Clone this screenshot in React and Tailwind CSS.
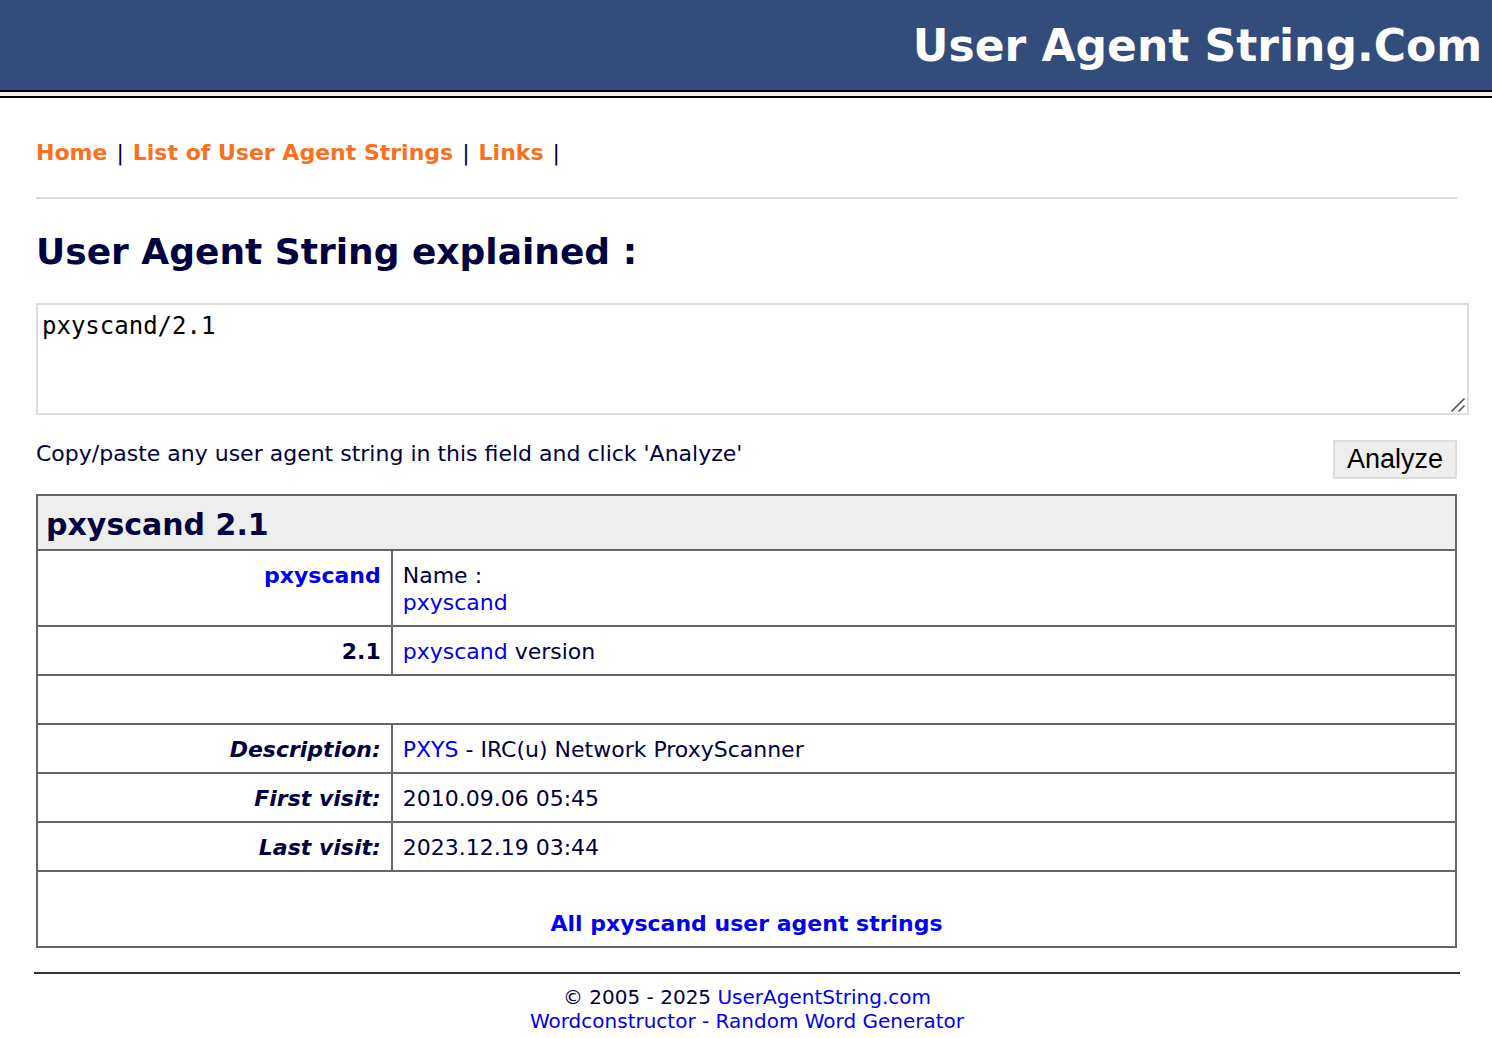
const link = "text-[#0000ee]";
const th = "border-2 border-[#666] px-2.5 pt-[11px] pb-[9px] text-right align-top";
const td = "border-2 border-[#666] px-2.5 pt-[11px] pb-[9px] text-left align-top";
const navLink = "font-bold text-[#f87020]";

function Row({ label, children, italic, blue }) {
  return (
    <tr>
      <th scope="row" className={th + (italic ? " italic" : "")}>
        {blue ? <a href="#name" className={link}>{label}</a> : label}
      </th>
      <td className={td}>{children}</td>
    </tr>
  );
}

export default function App() {
  return (
    <div className="min-h-screen bg-white font-['Verdana','DejaVu_Sans',sans-serif] text-[22px] leading-[27px] text-[#000040]">
      <header className="border-b-2 border-black bg-[#eee] pb-1">
        <div className="border-b-2 border-black bg-[#324c7c] pt-4 pr-2.5 pb-[14px] text-right text-[44px] leading-[60px] font-bold text-white">
          User Agent String.Com
        </div>
      </header>
      <div className="pr-[35px] pl-9">
        <nav className="flex gap-[9px] border-b-2 border-[#ddd] pt-[41px] pb-[31px]">
          <a href="#home" className={navLink}>Home</a>
          <span>|</span>
          <a href="#list" className={navLink}>List of User Agent Strings</a>
          <span>|</span>
          <a href="#links" className={navLink}>Links</a>
          <span>|</span>
        </nav>
        <h1 className="pt-[31px] pb-[29px] text-[36px] leading-[44px] font-bold">User Agent String explained :</h1>
        <form onSubmit={(e) => e.preventDefault()}>
          <div className="relative -mr-3">
            <textarea id="uas" defaultValue="pxyscand/2.1" className="block h-28 w-full resize-y border-2 border-[#ddd] bg-white px-1 py-1.5 font-['DejaVu_Sans_Mono',monospace] text-[24px] leading-[30px] text-black" />
            <svg aria-hidden="true" viewBox="0 0 16 16" className="pointer-events-none absolute right-0.5 bottom-0.5 size-4 bg-white" fill="none" stroke="#555" strokeWidth="1.6">
              <path d="M0.5 14.5L13.5 1.5M7.5 14.5L13.5 8.5" />
            </svg>
          </div>
          <div className="flex items-start justify-between pt-[25px] pb-[15px]">
            <label htmlFor="uas">Copy/paste any user agent string in this field and click 'Analyze'</label>
            <button type="submit" className="border-2 border-[#ddd] bg-[#eee] px-3 font-['Liberation_Sans',sans-serif] text-[27px] leading-[35px] text-black">Analyze</button>
          </div>
        </form>
        <table className="w-full table-fixed border-collapse">
          <colgroup><col className="w-1/4" /><col /></colgroup>
          <tbody>
            <tr>
              <th colSpan={2} className="border-2 border-[#666] bg-[#eee] px-2 pt-[10px] pb-1.5 text-left text-[30px] leading-[37px]">pxyscand 2.1</th>
            </tr>
            <Row label="pxyscand" blue>Name :<br /><a href="#p" className={link}>pxyscand</a></Row>
            <Row label="2.1"><a href="#p" className={link}>pxyscand</a> version</Row>
            <tr><td colSpan={2} className={td}>&nbsp;</td></tr>
            <Row label="Description:" italic><a href="#d" className={link}>PXYS</a> - IRC(u) Network ProxyScanner</Row>
            <Row label="First visit:" italic>2010.09.06 05:45</Row>
            <Row label="Last visit:" italic>2023.12.19 03:44</Row>
            <tr>
              <td colSpan={2} className="border-2 border-[#666] pt-[38px] pb-[9px] text-center font-bold"><a href="#all" className={link}>All pxyscand user agent strings</a></td>
            </tr>
          </tbody>
        </table>
      </div>
      <footer className="mr-8 ml-[34px] mt-6 border-t-2 border-[#333] pt-[11px] text-center text-[20px] leading-6">
        © 2005 - 2025 <a href="#u" className={link}>UserAgentString.com</a><br />
        <a href="#w" className={link}>Wordconstructor - Random Word Generator</a>
      </footer>
    </div>
  );
}
